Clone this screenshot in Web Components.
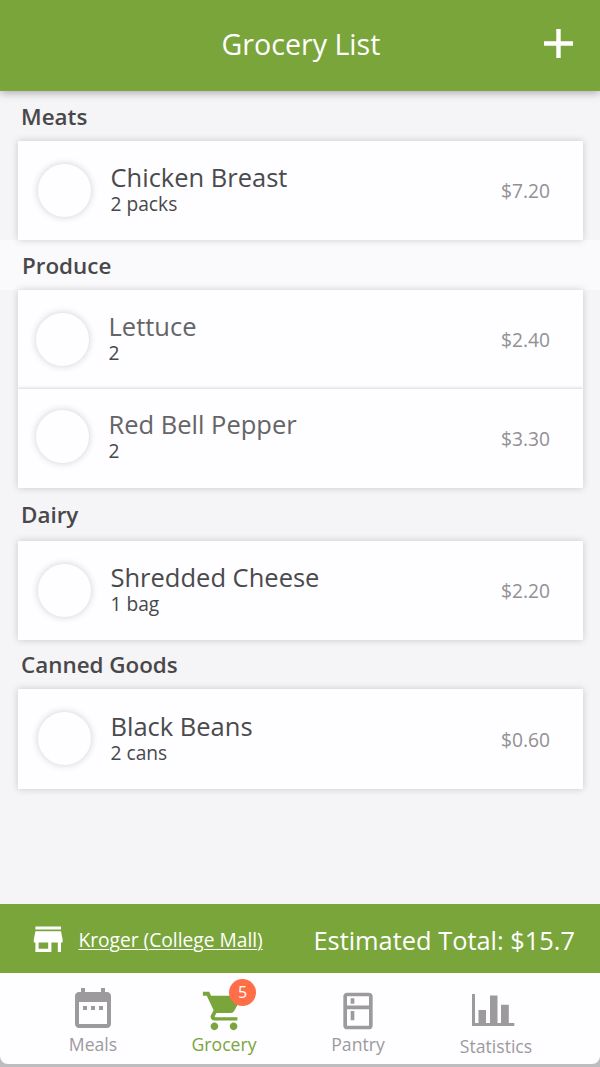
<!DOCTYPE html>
<html lang="en">
<head>
<meta charset="utf-8">
<title>Grocery List</title>
<style>
html,body{margin:0;height:100%;overflow:hidden;background:#f5f4f6}
body{font-family:"Open Sans","Noto Sans",sans-serif;color:#48484a}
</style>
</head>
<body>
<grocery-app></grocery-app>
<script>
const define = (name, html) => {
  const t = document.createElement('template');
  t.innerHTML = html;
  customElements.define(name, class extends HTMLElement {
    constructor() {
      super();
      this.attachShadow({mode: 'open'}).append(t.content.cloneNode(true));
    }
  });
};

define('app-header', `
<style>
:host{display:grid;grid-template-columns:1fr auto 1fr;align-items:center;height:91px;box-sizing:border-box;padding:0 27px;background:#79a53a;color:#fff;position:relative;z-index:1;box-shadow:0 2px 8px rgba(60,50,70,.38);flex:none}
h1{grid-column:2;margin:0 0 3px 2px;font-weight:400;font-size:28.6px;line-height:38px;white-space:nowrap}
svg{justify-self:end;display:block;margin-bottom:4px}
</style>
<h1><slot></slot></h1>
<svg width="29" height="29" viewBox="0 0 29 29"><path d="M12.3 0h4.4v12.3H29v4.4H16.7V29h-4.4V16.7H0v-4.4h12.3z" fill="#fff"/></svg>`);

define('list-section', `
<style>
:host{display:block}
header{height:var(--head,50px);box-sizing:border-box;padding:var(--pad,10px) 0 0 var(--left,21px);background:var(--tint,transparent);font-size:22.4px;line-height:32px;font-weight:600;white-space:nowrap}
.card{margin:0 17px 0 18px;background:#fefdff;border-radius:1px;box-shadow:0 0 7px rgba(70,60,80,.24);position:relative}
</style>
<header><slot name="title"></slot></header>
<div class="card"><slot></slot></div>`);

define('grocery-item', `
<style>
:host{display:flex;height:var(--h,99px);box-sizing:border-box;padding-right:33px;align-items:flex-start}
.check{width:53px;height:53px;border-radius:50%;background:#fefdff;box-shadow:0 0 6px 1px rgba(70,60,80,.19);flex:none;margin:var(--cy,23px) 0 0 var(--cx,20px)}
.text{margin:var(--ty,21px) 0 0 19.5px;flex:1;white-space:nowrap}
.name{font-size:25.5px;line-height:31px;color:var(--name,#4a4a4c)}
.qty{font-size:19.2px;line-height:22px}
.price{font-size:19.2px;line-height:26px;margin-top:var(--py,37px);color:#929093}
</style>
<div class="check"></div>
<div class="text"><div class="name"><slot></slot></div><div class="qty"><slot name="qty"></slot></div></div>
<div class="price"><slot name="price"></slot></div>`);

define('store-bar', `
<style>
:host{display:flex;align-items:center;height:69px;box-sizing:border-box;padding:0 25px 0 29px;background:#79a53a;color:#fff;white-space:nowrap;flex:none;margin-top:auto}
svg{width:38.4px;height:38.4px;fill:#fff;margin:1px 11px 0 0}
.store{font-size:19.2px;line-height:26px;text-decoration:underline;text-underline-offset:2px;text-decoration-thickness:1px;padding-top:3px}
.total{font-size:25.4px;line-height:34px;margin-left:auto;padding-top:2px}
</style>
<svg viewBox="0 0 24 24"><path d="M20 4H4v2h16V4zm1 10v-2l-1-5H4l-1 5v2h1v6h10v-6h4v6h2v-6h1zm-9 4H6v-4h6v4z"/></svg>
<span class="store"><slot name="store"></slot></span>
<span class="total"><slot name="total"></slot></span>`);

define('nav-tab', `
<style>
:host{display:flex;flex-direction:column;align-items:center;color:#9c9a9d;width:0;position:relative}
.icon{height:57px;display:flex;align-items:flex-start}
.label{font-size:17.6px;line-height:28px;white-space:nowrap;margin-top:var(--drop,0px)}
::slotted(svg){display:block;fill:currentColor;flex:none}
::slotted([slot=badge]){position:absolute;left:5px;top:6px;width:27px;height:27px;border-radius:50%;background:#ff6e46;color:#fff;font-size:16px;line-height:27px;text-align:center}
</style>
<div class="icon"><slot name="icon"></slot></div>
<div class="label"><slot></slot></div>
<slot name="badge"></slot>`);

define('tab-bar', `
<style>
:host{display:block;height:94px;background:#bdbcbe;flex:none}
nav{display:flex;height:91px;box-sizing:border-box;padding-left:93px;background:#fefdff;border-radius:0 0 8px 8px}
</style>
<nav><slot></slot></nav>`);

define('grocery-app', `
<style>
:host{display:flex;flex-direction:column;width:600px;height:1067px;background:#f5f4f6}
main{display:block}
nav-tab.active{color:#79a53a}
.soft{--name:#656466}
</style>
<app-header>Grocery List</app-header>
<main>
<list-section><span slot="title">Meats</span>
<grocery-item>Chicken Breast<span slot="qty">2 packs</span><span slot="price">$7.20</span></grocery-item></list-section>
<list-section class="soft" style="--tint:#faf9fb;--left:22px"><span slot="title">Produce</span>
<grocery-item style="--cx:18px">Lettuce<span slot="qty">2</span><span slot="price">$2.40</span></grocery-item>
<grocery-item style="--cx:18px;--cy:21px;--ty:20px;box-shadow:0 -1px 3px rgba(70,60,80,.2);clip-path:inset(-4px 0 0 0)">Red Bell Pepper<span slot="qty">2</span><span slot="price">$3.30</span></grocery-item></list-section>
<list-section style="--head:53px;--pad:11px"><span slot="title">Dairy</span>
<grocery-item>Shredded Cheese<span slot="qty">1 bag</span><span slot="price">$2.20</span></grocery-item></list-section>
<list-section style="--head:49px;--pad:9px"><span slot="title">Canned Goods</span>
<grocery-item style="--h:100px;--py:38px;--ty:22px">Black Beans<span slot="qty">2 cans</span><span slot="price">$0.60</span></grocery-item></list-section>
</main>
<store-bar><span slot="store">Kroger (College Mall)</span><span slot="total">Estimated Total: $15.7</span></store-bar>
<tab-bar>
<nav-tab><svg slot="icon" width="48" height="48" viewBox="0 0 24 24" style="margin-top:11px"><path d="M9 11H7v2h2v-2zm4 0h-2v2h2v-2zm4 0h-2v2h2v-2zm2-7h-1V2h-2v2H8V2H6v2H5c-1.11 0-1.99.9-1.99 2L3 20c0 1.1.89 2 2 2h14c1.1 0 2-.9 2-2V6c0-1.1-.9-2-2-2zm0 16H5V9h14v11z"/></svg>Meals</nav-tab>
<nav-tab class="active" style="margin-left:131px"><svg slot="icon" width="46" height="46" viewBox="0 0 24 24" style="margin-top:15px"><path d="M7 18c-1.1 0-1.99.9-1.99 2S5.9 22 7 22s2-.9 2-2-.9-2-2-2zM1 2v2h2l3.6 7.59-1.35 2.45c-.16.28-.25.61-.25.96 0 1.1.9 2 2 2h12v-1.8H7.42c-.14 0-.25-.11-.25-.25l.03-.32.9-1.63h7.45c.75 0 1.41-.41 1.75-1.03l3.58-6.49A1 1 0 0 0 20 4H5.21l-.94-2H1zm16 16c-1.1 0-1.99.9-1.99 2s.89 2 1.99 2 2-.9 2-2-.9-2-2-2z"/></svg>Grocery<span slot="badge">5</span></nav-tab>
<nav-tab style="margin-left:134px"><svg slot="icon" width="44" height="44" viewBox="0 0 24 24" style="margin-top:16px"><path d="M18 2.01L6 2c-1.1 0-2 .89-2 2v16c0 1.1.9 2 2 2h12c1.1 0 2-.9 2-2V4c0-1.1-.9-1.99-2-1.99zM18 20H6v-9.02h12V20zm0-11H6V4h12v5zM8 5h2v3H8V5zm0 7h2v5H8v-5z"/></svg>Pantry</nav-tab>
<nav-tab style="margin-left:138px;--drop:2px"><svg slot="icon" width="48" height="32" viewBox="0 0 48 32" style="margin-top:21px"><path d="M0 0h3v29h3.5V16H14v13h4V1.5h7.5V29H29V10.7h7.8V29h5.5v3H0z"/></svg>Statistics</nav-tab>
</tab-bar>`);
</script>
</body>
</html>
